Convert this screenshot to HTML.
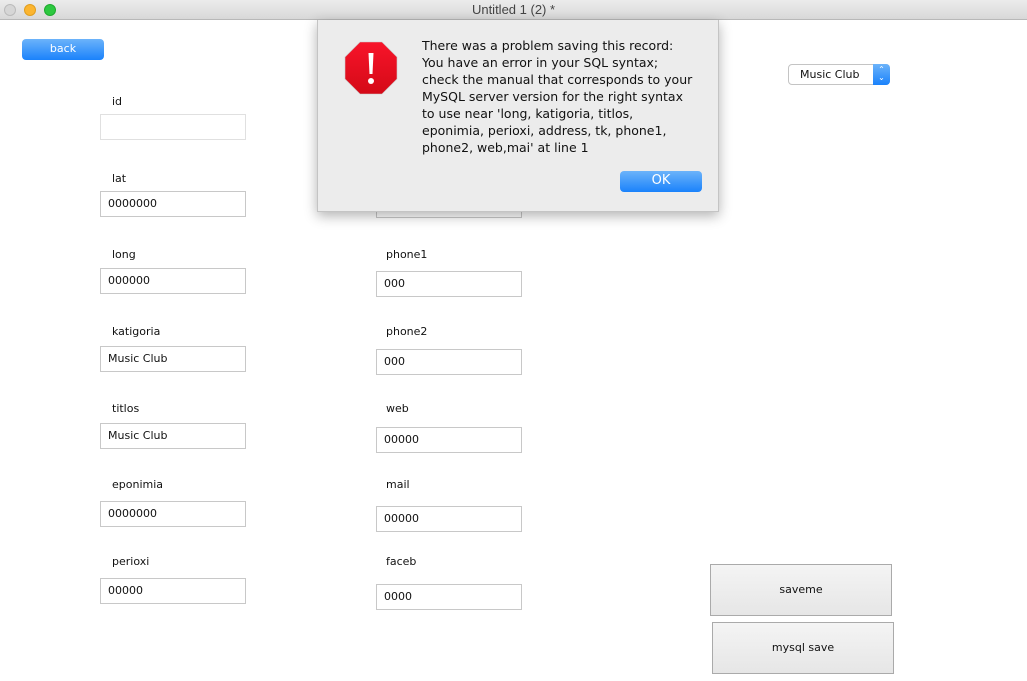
<!DOCTYPE html>
<html><head><meta charset="utf-8"><style>
*{box-sizing:border-box;margin:0;padding:0}
body{width:1027px;height:681px;position:relative;background:#fff;font-family:"Lucida Grande","DejaVu Sans","Liberation Sans",sans-serif;font-size:11px;color:#111;overflow:hidden}
.tb{position:absolute;left:0;top:0;width:1027px;height:20px;background:linear-gradient(#ececec,#d8d8d8);border-bottom:1px solid #b8b8b8;text-align:center;font-family:"Liberation Sans",sans-serif;font-size:13px;line-height:19px;color:#444}
.dot{position:absolute;top:4px;width:12px;height:12px;border-radius:50%}
.lbl{position:absolute;font-size:11px}
.in{position:absolute;width:146px;height:26px;border:1px solid #c8c8c8;background:#fff;padding-left:7px;line-height:24px;font-size:11px}
.btn{position:absolute;border:1px solid #aaa;background:linear-gradient(#f4f4f4,#e6e6e6);text-align:center;font-size:11px}
</style></head><body>
<div class="tb">Untitled 1 (2) *</div>
<div class="dot" style="left:4px;background:#d6d6d6;border:1px solid #bbb"></div>
<div class="dot" style="left:24px;background:#fbb530;border:1px solid #e09e1e"></div>
<div class="dot" style="left:44px;background:#2dc840;border:1px solid #1eaa2e"></div>

<div style="position:absolute;left:22px;top:39px;width:82px;height:21px;border-radius:4px;background:linear-gradient(#6cb3fa,#1a82fb);color:#fff;text-align:center;line-height:19px;font-size:11px">back</div>

<div class="lbl" style="left:112px;top:95px">id</div><div class="in" style="left:100px;top:114px;border-color:#e0e0e0"></div>
<div class="lbl" style="left:112px;top:172px">lat</div><div class="in" style="left:100px;top:191px">0000000</div>
<div class="lbl" style="left:112px;top:248px">long</div><div class="in" style="left:100px;top:268px">000000</div>
<div class="lbl" style="left:112px;top:325px">katigoria</div><div class="in" style="left:100px;top:346px">Music Club</div>
<div class="lbl" style="left:112px;top:402px">titlos</div><div class="in" style="left:100px;top:423px">Music Club</div>
<div class="lbl" style="left:112px;top:478px">eponimia</div><div class="in" style="left:100px;top:501px">0000000</div>
<div class="lbl" style="left:112px;top:555px">perioxi</div><div class="in" style="left:100px;top:578px">00000</div>

<div class="in" style="left:376px;top:192px"></div>
<div class="lbl" style="left:386px;top:248px">phone1</div><div class="in" style="left:376px;top:271px">000</div>
<div class="lbl" style="left:386px;top:325px">phone2</div><div class="in" style="left:376px;top:349px">000</div>
<div class="lbl" style="left:386px;top:402px">web</div><div class="in" style="left:376px;top:427px">00000</div>
<div class="lbl" style="left:386px;top:478px">mail</div><div class="in" style="left:376px;top:506px">00000</div>
<div class="lbl" style="left:386px;top:555px">faceb</div><div class="in" style="left:376px;top:584px">0000</div>

<div style="position:absolute;left:788px;top:64px;width:102px;height:21px;border:1px solid #c4c4c4;border-radius:4px;background:#fff;font-size:11px;line-height:19px;padding-left:11px">Music Club
<div style="position:absolute;right:-1px;top:-1px;width:17px;height:21px;border-radius:0 4px 4px 0;background:linear-gradient(#6cb3fa,#1a82fb);color:#fff;font-size:8px;line-height:8px;text-align:center;padding-top:2px">&#8963;<br>&#8964;</div></div>

<div class="btn" style="left:710px;top:564px;width:182px;height:52px;line-height:50px">saveme</div>
<div class="btn" style="left:712px;top:622px;width:182px;height:52px;line-height:50px">mysql save</div>

<div style="position:absolute;left:317px;top:20px;width:402px;height:192px;background:#ececec;border:1px solid #c4c4c4;border-top:none;box-shadow:0 4px 12px rgba(0,0,0,.3)">
<svg style="position:absolute;left:26px;top:21px" width="54" height="54" viewBox="0 0 54 54"><defs><linearGradient id="g" x1="0" y1="0" x2="0" y2="1"><stop offset="0" stop-color="#f8142a"/><stop offset="1" stop-color="#d40a17"/></linearGradient></defs><polygon points="16,1 38,1 53,16 53,38 38,53 16,53 1,38 1,16" fill="url(#g)" stroke="#c8c8c8" stroke-width="0.6"/><path d="M24.5,12 h5 l-1,21 h-3 z" fill="#fff"/><circle cx="27" cy="40" r="3" fill="#fff"/></svg>
<div style="position:absolute;left:104px;top:17px;font-size:12.5px;line-height:17px;color:#111;white-space:nowrap">There was a problem saving this record:<br>You have an error in your SQL syntax;<br>check the manual that corresponds to your<br>MySQL server version for the right syntax<br>to use near 'long, katigoria, titlos,<br>eponimia, perioxi, address, tk, phone1,<br>phone2, web,mai' at line 1</div>
<div style="position:absolute;left:302px;top:151px;width:82px;height:21px;border-radius:4px;background:linear-gradient(#6cb3fa,#1a82fb);color:#fff;text-align:center;line-height:20px;font-size:13px">OK</div>
</div>
</body></html>
